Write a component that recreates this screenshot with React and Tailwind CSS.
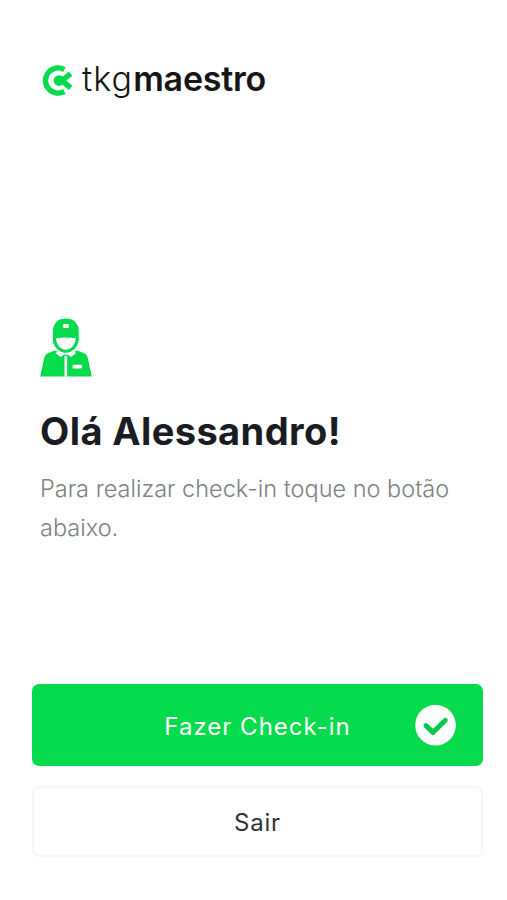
import React from "react";

const LogoMark = () => (
  <svg width="32" height="36" viewBox="0 0 32 36" fill="none">
    <path
      d="M22.4 8.6A12.6 12.6 0 1 0 22.4 30.4"
      stroke="#05db4c"
      strokeWidth="5.4"
    />
    <path
      d="M28.6 12.6L20 19.7L28.6 26.8"
      stroke="#05db4c"
      strokeWidth="5.6"
    />
    <circle cx="17" cy="19.6" r="5.3" fill="#05db4c" />
  </svg>
);

const WorkerIcon = () => (
  <svg width="52" height="59" viewBox="0 0 52 59">
    {/* Head and cap */}
    <path
      d="M12.8 13.5C12.8 5 18.5 0.5 25.8 0.5S38.8 5 38.8 13.5V21C38.8 28 33 34.8 25.8 34.8S12.8 28 12.8 21Z"
      fill="#05db4c"
    />
    <path
      d="M16 20.2C22 19.4 29.6 19.4 35.6 20.2C35.4 26.6 31 31.7 25.8 31.7S16.2 26.6 16 20.2Z"
      fill="white"
    />
    <rect x="22.8" y="6" width="6.2" height="4" rx="1.4" fill="white" />
    {/* Jacket */}
    <path
      d="M14.5 32.5L26 37L37.5 32.5L44 35.2C46.2 36.2 47.2 37.8 47.8 40L51.8 58.5H0.2L4.2 40C4.8 37.8 5.8 36.2 8 35.2Z"
      fill="#05db4c"
    />
    <path d="M15.4 35L19.2 33L24.8 36L20.5 39Z" fill="white" />
    <path d="M36.2 35L32.4 33L26.8 36L31.1 39Z" fill="white" />
    <path d="M25.8 38V58.5" stroke="white" strokeWidth="2.6" />
    <rect x="32.6" y="46.8" width="9.4" height="3.8" rx="1.4" fill="white" />
  </svg>
);

const CheckIcon = () => (
  <svg width="41" height="41" viewBox="0 0 41 41" fill="none">
    <circle cx="20.5" cy="20.2" r="20.3" fill="white" />
    <path
      d="M11 20.6L18 27.4L30.3 15.3"
      stroke="#08c94b"
      strokeWidth="5"
      strokeLinecap="round"
      strokeLinejoin="round"
    />
  </svg>
);

const App = () => {
  return (
    <div className="flex h-[900px] w-[507px] flex-col bg-white pl-8 pr-6 font-['Inter',sans-serif]">
      <header className="mt-[59px] flex h-10 items-center pl-[10px]">
        <LogoMark />
        <div className="ml-2 flex whitespace-nowrap pb-px text-[34px] leading-10 text-[#161616]">
          <span className="font-light tracking-[1.1px]">tkg</span>
          <span className="font-semibold tracking-[-0.2px]">maestro</span>
        </div>
      </header>

      <main className="mt-[219px] pl-2">
        <WorkerIcon />
        <h1 className="mt-[30px] whitespace-nowrap text-[38px] font-bold leading-[48px] tracking-[0.4px] text-[#191c23]">
          Olá Alessandro!
        </h1>
        <p className="mt-[15px] whitespace-nowrap text-[23.5px] font-light leading-[38.5px] text-[#7d8282]">
          Para realizar check-in toque no botão
          <br />
          abaixo.
        </p>
      </main>

      <div className="mt-auto mb-[43px] flex flex-col gap-5">
        <button className="grid h-[82px] w-full grid-cols-[1fr_auto_1fr] items-center rounded-[7px] bg-[#05db4c] pl-[27px] pr-[27px] text-2xl text-white">
          <span className="col-start-2 pt-[3px] tracking-[1px]">
            Fazer Check-in
          </span>
          <span className="justify-self-end">
            <CheckIcon />
          </span>
        </button>
        <button className="h-[71px] w-full rounded-[7px] border-2 border-[#f6f6f6] bg-white pt-[2px] text-2xl tracking-[0.8px] text-[#303236]">
          Sair
        </button>
      </div>
    </div>
  );
};

export default App;
